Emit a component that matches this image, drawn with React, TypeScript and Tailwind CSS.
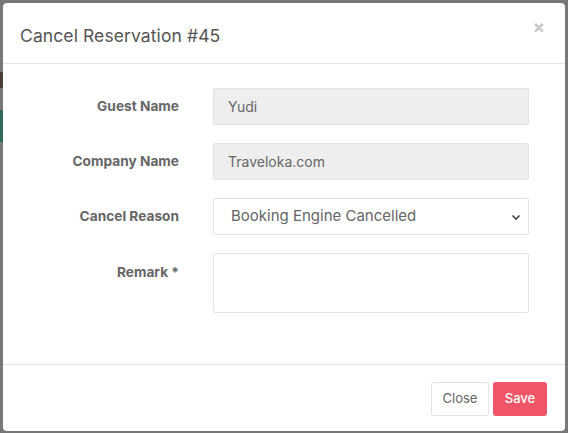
import React from "react";

const font = { fontFamily: "Inter, 'Noto Sans', sans-serif" };

function Row({ label, children, top = false }: { label: string; children: React.ReactNode; top?: boolean }) {
  return (
    <div className={`flex ${top ? "items-start" : "items-center"}`}>
      <div className={`w-[176px] shrink-0 text-right text-[13.7px] font-bold text-[#666] ${top ? "pt-[9px]" : ""}`}>{label}</div>
      <div className="ml-[34px] w-[316px]">{children}</div>
    </div>
  );
}

export default function App() {
  return (
    <div className="relative h-[433px] w-[568px] overflow-hidden bg-[#777777]" style={font}>
      <div className="absolute left-0 top-[72px] h-[16px] w-[3px] bg-[#4a3f33]" />
      <div className="absolute left-0 top-[110px] h-[32px] w-[3px] bg-[#2f6a5c]" />
      <div className="flex h-full px-[3px] pt-[3px]">
        <div className="flex h-[428px] w-[562px] flex-col rounded-[4px] bg-white">
          <div className="flex h-[61px] items-start justify-between border-b border-[#e5e5e5] pl-[17px] pr-[20px]">
            <div className="pt-[20px] text-[17.5px] tracking-[0.1px] text-[#555]">Cancel Reservation #45</div>
            <div className="pt-[15px] text-[18px] font-bold leading-none text-[#c8c8c8]">×</div>
          </div>
          <div className="flex h-[300px] flex-col gap-[18px] pt-[24px]">
            <Row label="Guest Name">
              <div className="flex h-[37px] items-center rounded-[2px] border border-[#e3e3e3] bg-[#eeeeee] px-[14px] text-[14px] text-[#666]">Yudi</div>
            </Row>
            <Row label="Company Name">
              <div className="flex h-[37px] items-center rounded-[2px] border border-[#e3e3e3] bg-[#eeeeee] px-[14px] text-[14px] text-[#666]">Traveloka.com</div>
            </Row>
            <Row label="Cancel Reason">
              <div className="flex h-[37px] items-center justify-between rounded-[2px] border border-[#e3e3e3] bg-white pl-[17px] pr-[7px] text-[15px] text-[#666]">
                <span>Booking Engine Cancelled</span>
                <svg width="10" height="10" viewBox="0 0 10 10"><path d="M1.5 3.5 L5 7 L8.5 3.5" fill="none" stroke="#444" strokeWidth="1.6" /></svg>
              </div>
            </Row>
            <Row label="Remark *" top>
              <div className="h-[60px] rounded-[2px] border border-[#e3e3e3] bg-white" />
            </Row>
          </div>
          <div className="flex flex-1 items-start justify-end gap-[4px] border-t border-[#e5e5e5] pr-[18px] pt-[17px]">
            <button className="h-[34px] w-[58px] rounded-[3px] border border-[#e3e3e3] bg-white text-[13px] text-[#666]">Close</button>
            <button className="h-[34px] w-[54px] rounded-[3px] bg-[#ef5566] text-[13px] font-medium text-white">Save</button>
          </div>
        </div>
      </div>
    </div>
  );
}
